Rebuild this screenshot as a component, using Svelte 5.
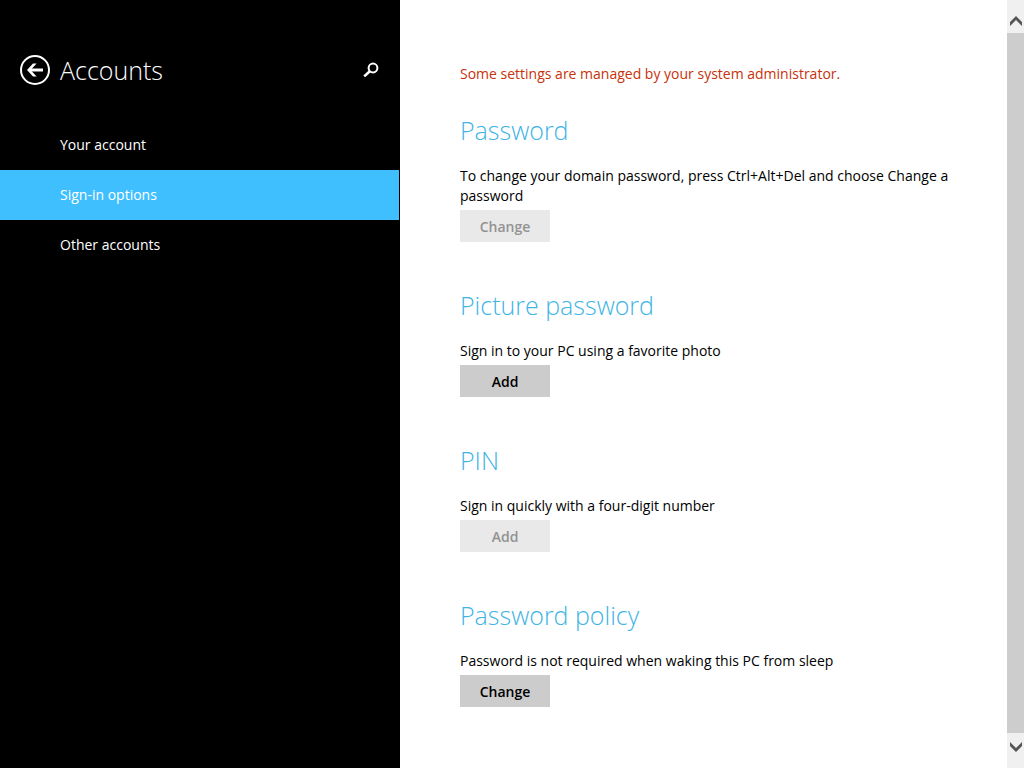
<script lang="ts">
	const pages = [
		{ id: 'your-account', label: 'Your account' },
		{ id: 'sign-in', label: 'Sign-in options' },
		{ id: 'other-accounts', label: 'Other accounts' }
	];

	const settings = [
		{
			title: 'Password',
			text: 'To change your domain password, press Ctrl+Alt+Del and choose Change a password',
			action: 'Change',
			disabled: true
		},
		{
			title: 'Picture password',
			text: 'Sign in to your PC using a favorite photo',
			action: 'Add',
			disabled: false
		},
		{
			title: 'PIN',
			text: 'Sign in quickly with a four-digit number',
			action: 'Add',
			disabled: true
		},
		{
			title: 'Password policy',
			text: 'Password is not required when waking this PC from sleep',
			action: 'Change',
			disabled: false
		}
	];

	let current = $state('sign-in');
</script>

<div class="shell">
	<aside class="sidebar">
		<header>
			<button class="icon-btn" aria-label="Back">
				<svg width="30" height="30" viewBox="0 0 30 30" fill="none" stroke="#fff">
					<circle cx="15" cy="15" r="14" stroke-width="2" />
					<path d="M9 15H23" stroke-width="3" />
					<path d="M7 15L13 8.5H16.6L10.6 15L16.6 21.5H13Z" fill="#fff" stroke="none" />
				</svg>
			</button>
			<h1>Accounts</h1>
			<button class="icon-btn" aria-label="Search">
				<svg width="16" height="16" viewBox="0 0 16 16" fill="none" stroke="#fff">
					<circle cx="10" cy="6" r="4.4" stroke-width="2" />
					<path d="M6.8 9.2L1.2 14.4" stroke-width="2.6" />
				</svg>
			</button>
		</header>
		<nav>
			{#each pages as page}
				<a href="#{page.id}" class:active={current === page.id} onclick={() => (current = page.id)}>
					{page.label}
				</a>
			{/each}
		</nav>
	</aside>

	<main>
		<p class="notice">Some settings are managed by your system administrator.</p>
		{#each settings as item}
			<section>
				<h2>{item.title}</h2>
				<p>{item.text}</p>
				<button class="action" disabled={item.disabled}>{item.action}</button>
			</section>
		{/each}
	</main>

	<div class="scrollbar">
		<button aria-label="Scroll up">
			<svg width="12" height="10" viewBox="0 0 12 10">
				<path d="M6 0L12 6V10L6 4L0 10V6Z" fill="#555" />
			</svg>
		</button>
		<div class="thumb"></div>
		<button aria-label="Scroll down">
			<svg width="12" height="10" viewBox="0 0 12 10">
				<path d="M6 10L12 4V0L6 6L0 0V4Z" fill="#555" />
			</svg>
		</button>
	</div>
</div>

<style>
	:global(body) {
		margin: 0;
		background: #fff;
	}

	.shell {
		display: flex;
		height: 100vh;
		overflow: hidden;
		font-family: 'Open Sans', 'Noto Sans', sans-serif;
		font-size: 14px;
		line-height: 20px;
		color: #000;
	}

	h1,
	h2,
	p {
		margin: 0;
	}

	button {
		padding: 0;
		border: 0;
		font: inherit;
	}

	.sidebar {
		box-sizing: border-box;
		flex: 0 0 400px;
		border-right: 1px solid #000;
		background: #000;
		color: #fff;
	}

	header {
		display: flex;
		align-items: center;
		gap: 10px;
		padding: 50px 20px 30px;
	}

	h1 {
		flex: 1;
		font-size: 25px;
		font-weight: 300;
		line-height: 40px;
	}

	.icon-btn {
		display: flex;
		background: none;
	}

	nav a {
		display: block;
		padding: 0 60px;
		line-height: 50px;
		color: #fff;
		text-decoration: none;
	}

	nav a.active {
		background: #40bfff;
	}

	main {
		flex: 1;
		min-width: 0;
		padding: 64px 40px 0 60px;
	}

	.notice {
		margin-bottom: 28px;
		color: #c8320a;
	}

	section {
		margin-bottom: 45px;
	}

	h2 {
		margin-bottom: 18px;
		font-size: 25px;
		font-weight: 300;
		line-height: 36px;
		color: #40b4e5;
	}

	.action {
		display: block;
		min-width: 90px;
		height: 32px;
		margin-top: 4px;
		padding-top: 2px;
		background: #ccc;
		color: #000;
		font-weight: 600;
	}

	.action:disabled {
		background: #e9e9e9;
		color: #929292;
	}

	.scrollbar {
		display: flex;
		flex-direction: column;
		flex: 0 0 17px;
		background: #f0f0f0;
	}

	.scrollbar button {
		display: flex;
		align-items: center;
		justify-content: center;
		height: 33px;
		padding-top: 9px;
		background: none;
	}

	.scrollbar button:last-child {
		height: 35px;
		padding: 0 0 7px;
	}

	.thumb {
		flex: 1;
		background: #cdcdcd;
	}
</style>
